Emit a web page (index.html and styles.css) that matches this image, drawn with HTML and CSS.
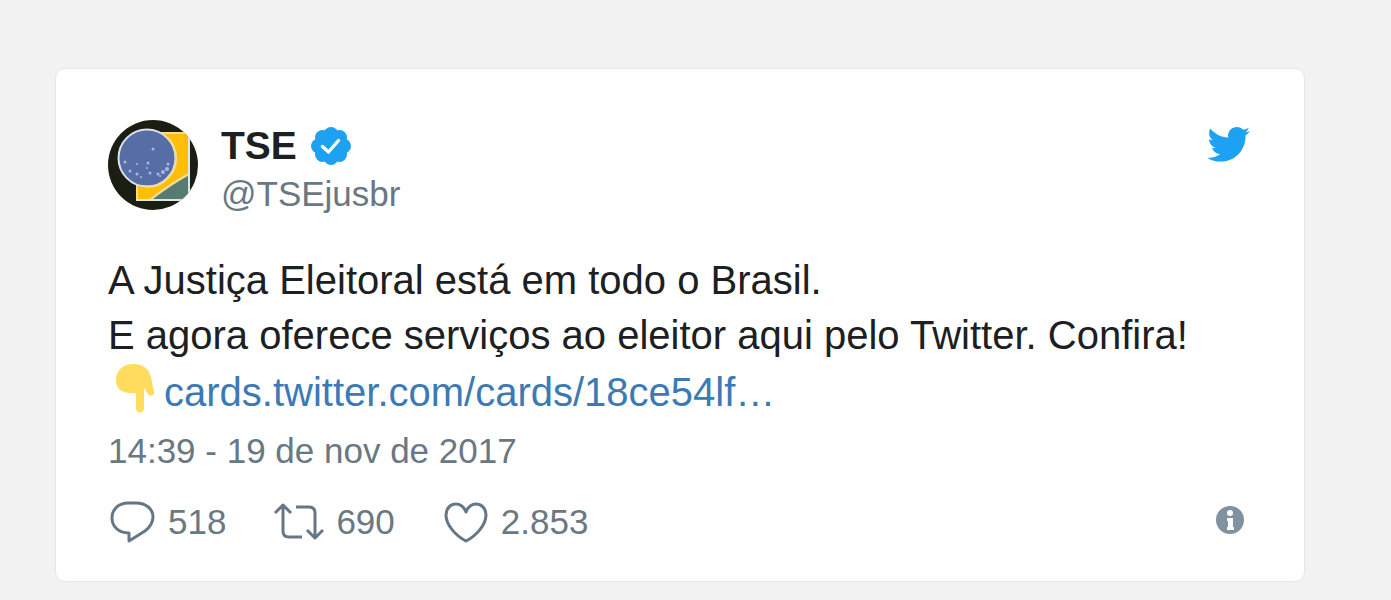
FILE: index.html
```
<!DOCTYPE html>
<html lang="pt-BR">
<head>
    <meta charset="utf-8">
    <title>TSE no Twitter</title>
    <link rel="stylesheet" href="styles.css">
</head>
<body>
    <article class="tweet">
        <header class="header">
            <a class="author" href="#">
                <svg class="avatar" viewBox="0 0 90 90" aria-hidden="true">
                    <defs>
                        <clipPath id="round"><circle cx="45" cy="45" r="45"/></clipPath>
                    </defs>
                    <g clip-path="url(#round)">
                        <path fill="#1b1e12" d="M0 0h90v90H0z"/>
                        <path fill="#fdbd08" stroke="#f3dd8a" stroke-width="2" d="M52 13h29v67H29V62z"/>
                        <path fill="#567b70" d="M81 54v26H42q19-15 39-26z"/>
                        <path fill="none" stroke="#f0dfa0" stroke-width="2" d="M81 54q-20 11-39 26"/>
                        <path fill="none" stroke="#dce8e3" stroke-width="2" d="M81 14v66H29"/>
                        <circle cx="39" cy="38" r="28.5" fill="#566da5" stroke="#dce2eb" stroke-width="2"/>
                        <path fill="none" stroke="#f2dd8b" stroke-width="2" d="M60 18c11 12 11 30-1 41-7 7-15 9-24 7"/>
                        <g fill="#a9b8df">
                            <circle cx="45" cy="29" r="1.5"/><circle cx="17" cy="42" r="1.5"/><circle cx="29" cy="44" r="1"/>
                            <circle cx="40" cy="43" r="1.5"/><circle cx="22" cy="51" r="1.5"/><circle cx="29" cy="54" r="1.5"/>
                            <circle cx="33" cy="57" r="1"/><circle cx="42" cy="53" r="1.5"/><circle cx="50" cy="54" r="1.5"/>
                            <circle cx="55" cy="52" r="2"/><circle cx="59" cy="49" r="2"/><circle cx="60" cy="44" r="1.5"/>
                            <circle cx="39" cy="48" r="1"/><circle cx="52" cy="56" r="1"/>
                        </g>
                    </g>
                </svg>
                <span class="names">
                    <span class="name">TSE
                        <svg class="verified" viewBox="0 0 40 38" role="img" aria-label="Conta verificada">
                            <g fill="#1da1f2">
                                <circle cx="20" cy="19" r="15"/>
                                <circle cx="20" cy="7.500" r="7.500"/><circle cx="28.500" cy="10.500" r="7.500"/>
                                <circle cx="32.500" cy="19" r="7.500"/><circle cx="28.500" cy="27.500" r="7.500"/>
                                <circle cx="20" cy="30.500" r="7.500"/><circle cx="11.500" cy="27.500" r="7.500"/>
                                <circle cx="7.500" cy="19" r="7.500"/><circle cx="11.500" cy="10.500" r="7.500"/>
                            </g>
                            <path fill="none" stroke="#fff" stroke-width="3.4" stroke-linecap="round" stroke-linejoin="round" d="M11.500 19.500l6 5.500L27.500 13.500"/>
                        </svg>
                    </span>
                    <span class="handle">@TSEjusbr</span>
                </span>
            </a>
            <a class="brand" href="#" aria-label="Ver no Twitter">
                <svg class="bird" viewBox="3 9 66 54" aria-hidden="true">
                    <path fill="#1da1f2" d="M68.812 15.14c-2.348 1.04-4.87 1.744-7.52 2.06 2.704-1.62 4.78-4.186 5.757-7.243-2.53 1.5-5.33 2.592-8.314 3.176C56.35 10.59 52.948 9 49.182 9c-7.23 0-13.092 5.86-13.092 13.093 0 1.026.118 2.02.338 2.98C25.543 24.527 15.9 19.318 9.44 11.396c-1.125 1.936-1.77 4.184-1.77 6.58 0 4.543 2.312 8.552 5.824 10.9-2.146-.07-4.165-.658-5.93-1.64-.002.056-.002.11-.002.163 0 6.345 4.513 11.638 10.504 12.84-1.1.298-2.256.457-3.45.457-.845 0-1.666-.078-2.464-.23 1.667 5.2 6.5 8.985 12.23 9.09-4.482 3.51-10.13 5.605-16.26 5.605-1.055 0-2.096-.06-3.122-.184 5.794 3.717 12.676 5.882 20.067 5.882 24.083 0 37.25-19.95 37.25-37.25 0-.565-.013-1.133-.038-1.693 2.558-1.847 4.778-4.15 6.532-6.774z"/>
                </svg>
            </a>
        </header>

        <p class="text">
            A Justiça Eleitoral está em todo o Brasil.<br>
            E agora oferece serviços ao eleitor aqui pelo Twitter. Confira!<br>
            <svg class="emoji" viewBox="0 0 48 50" aria-hidden="true">
                <path fill="#ffdc5d" d="M8 18C8 7 15 1 26 1c9 0 15 5 17 13l3 15c1 4-4 5-6 2l-4-6v20c0 6-8 6-8 0V30c-10 1-20-2-20-12z"/>
            </svg><a class="link" href="#">cards.twitter.com/cards/18ce54lf…</a>
        </p>

        <a class="date" href="#"><time datetime="2017-11-19T14:39">14:39 - 19 de nov de 2017</time></a>

        <footer class="actions">
            <a class="action" href="#" aria-label="518 respostas">
                <svg class="icon reply" viewBox="-1 0 48 44" aria-hidden="true">
                    <path d="M20 33C9 33 3 26 3 18 3 9 10 3 19 3h8c10 0 17 6 17 14 0 6-3 10-8 14L20 41z"/>
                </svg>
                518
            </a>
            <a class="action" href="#" aria-label="690 retweets">
                <svg class="icon retweet" viewBox="1 0 50 44" aria-hidden="true">
                    <path d="M2 13l8-8 8 8M10 6v25q0 6 6 6h13M23 7h13q6 0 6 6v25M34 30l8 8 8-8"/>
                </svg>
                690
            </a>
            <a class="action" href="#" aria-label="2.853 curtidas">
                <svg class="icon like" viewBox="0 0 46 44" aria-hidden="true">
                    <path d="M23 41C13 36 3 25 3 15 3 8 8 4 13 4c5 0 8 3 10 8 2-5 5-8 10-8 5 0 10 4 10 11 0 10-10 21-20 26z"/>
                </svg>
                2.853
            </a>
            <a class="info" href="#" aria-label="Informações sobre anúncios">
                <svg class="info-icon" viewBox="0 0 28 28" aria-hidden="true">
                    <circle cx="14" cy="14" r="14" fill="#8091a0"/>
                    <circle cx="14" cy="7" r="3" fill="#fff"/>
                    <path fill="#fff" d="M11 12h6v9h1v3h-7v-3h1v-6h-1z"/>
                </svg>
            </a>
        </footer>
    </article>
</body>
</html>
```

FILE: styles.css
```
body { margin: 0; padding: 68px 86px 19px 55px; background: #f2f2f2; font-family: "Liberation Sans", Arial, sans-serif; color: #1c2022; }
a { color: inherit; text-decoration: none; }
svg { display: block; flex: none; }
.tweet { padding: 51px 54px 37px 52px; background: white; border: 1px solid #e1e8ed; border-radius: 10px; }

.header { display: flex; justify-content: space-between; align-items: flex-start; }
.author { display: flex; gap: 23px; }
.avatar { width: 90px; height: 90px; }
.names { padding-top: 2px; }
.name { display: flex; align-items: center; gap: 14px; font-size: 39px; font-weight: bold; line-height: 48px; }
.verified { width: 40px; height: 38px; }
.handle { display: block; font-size: 35px; line-height: 48px; color: #697882; }
.brand { padding-top: 7px; }
.bird { width: 44px; height: 36px; }

.text { margin: 35px 0 11px; font-size: 40px; line-height: 55px; }
.emoji { display: inline-block; width: 48px; height: 50px; margin-right: 8px; vertical-align: -7px; }
.link { color: #3b7ab5; }
.date { display: block; font-size: 35px; line-height: 40px; color: #697882; }

.actions { display: flex; align-items: center; gap: 48px; margin-top: 29px; font-size: 35px; line-height: 44px; color: #697882; }
.action { display: flex; align-items: center; gap: 12px; }
.icon { height: 44px; fill: none; stroke: #657786; stroke-width: 3; stroke-linejoin: round; }
.reply { width: 48px; }
.retweet { width: 50px; }
.like { width: 46px; }
.info { margin-left: auto; padding: 0 6px 4px 0; }
.info-icon { width: 28px; height: 28px; }
```
